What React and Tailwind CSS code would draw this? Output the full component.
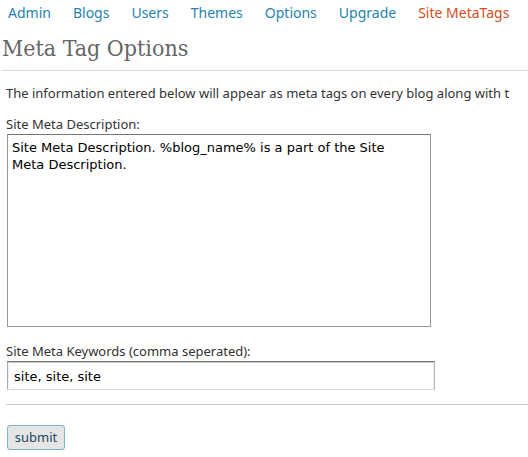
const links = ["Admin", "Blogs", "Users", "Themes", "Options", "Upgrade", "Site MetaTags"];

export default function App() {
  return (
    <main className="overflow-hidden bg-white font-['Noto_Sans',sans-serif] text-[13px] leading-5 text-[#333]">
      <nav className="flex gap-[22px] whitespace-nowrap pt-[3px] pl-2 text-[14px]">
        {links.map((name) => (
          <a
            key={name}
            href="#"
            aria-current={name === "Site MetaTags" ? "page" : undefined}
            className={name === "Site MetaTags" ? "text-[#d54e21]" : "text-[#2583ad]"}
          >
            {name}
          </a>
        ))}
      </nav>
      <h1 className="ml-0.5 border-b border-[#dadada] pt-[10px] pb-1.5 font-['DejaVu_Serif_Condensed','DejaVu_Serif',serif] text-[23px] leading-[31px] text-[#666]">
        Meta Tag Options
      </h1>
      <form className="pl-1.5" onSubmit={(e) => e.preventDefault()}>
        <p className="mt-3 whitespace-nowrap">
          The information entered below will appear as meta tags on every blog along with t
        </p>
        <label htmlFor="description" className="mt-[11px] block">
          Site Meta Description:
        </label>
        <textarea
          id="description"
          className="ml-px block h-[193px] w-[424px] max-w-full resize-none border border-[#999] border-t-[#777] bg-white py-1 pr-8 pl-1 font-['DejaVu_Sans',sans-serif] text-[13px] leading-[17px] text-black outline-none"
          defaultValue="Site Meta Description. %blog_name% is a part of the Site Meta Description."
        />
        <label htmlFor="keywords" className="mt-[14px] block">
          Site Meta Keywords (comma seperated):
        </label>
        <input
          id="keywords"
          type="text"
          defaultValue="site, site, site"
          className="ml-px block h-[29px] w-[428px] max-w-full border border-t-[#737373] border-r-[#b5b5b5] border-b-[#dadada] border-l-[#aaa] bg-white px-1.5 pt-0.5 font-['DejaVu_Sans',sans-serif] text-[13px] text-black shadow-[inset_0_1px_0_#ccc,inset_1px_0_0_#eee,inset_-1px_0_0_#eee] outline-none"
        />
        <hr className="mt-[14px] border-t border-[#ccc]" />
        <button
          type="submit"
          className="mt-5 ml-px block h-[25px] w-[58px] rounded-[3px] border border-[#80b5d0] bg-[#e5e5e5] pb-0.5 text-[13px] leading-5 text-[#264761]"
        >
          submit
        </button>
      </form>
    </main>
  );
}
